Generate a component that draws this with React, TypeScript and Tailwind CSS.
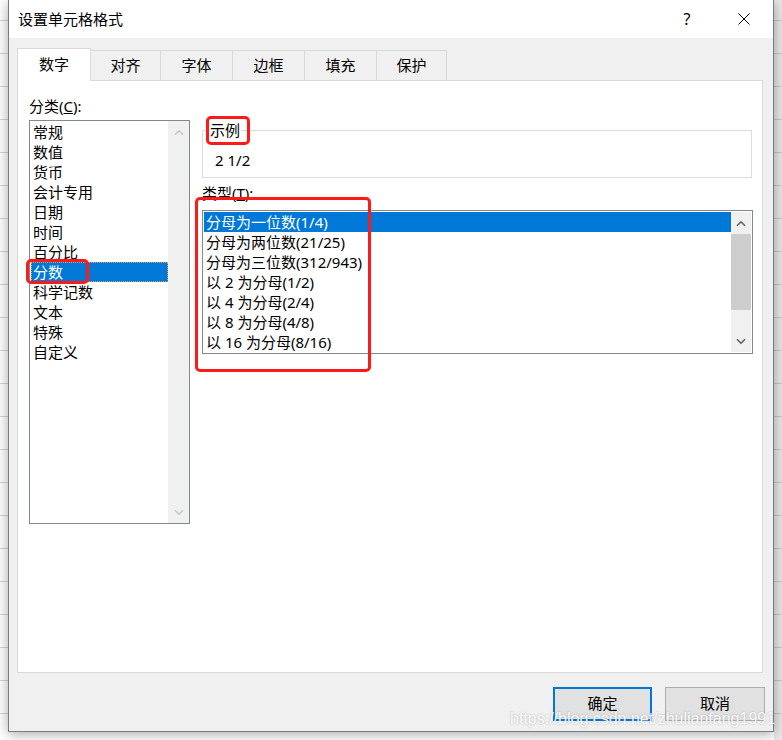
import React from 'react'

const categories = [
  '常规', '数值', '货币', '会计专用', '日期', '时间',
  '百分比', '分数', '科学记数', '文本', '特殊', '自定义'
]

const fractionTypes = [
  '分母为一位数(1/4)',
  '分母为两位数(21/25)',
  '分母为三位数(312/943)',
  '以 2 为分母(1/2)',
  '以 4 为分母(2/4)',
  '以 8 为分母(4/8)',
  '以 16 为分母(8/16)'
]

const tabs = [
  { label: '对齐', width: 'w-[70px]' },
  { label: '字体', width: 'w-[72px]' },
  { label: '边框', width: 'w-[72px]' },
  { label: '填充', width: 'w-[72px]' },
  { label: '保护', width: 'w-[70px]' }
]

function Chevron({ up, color }: { up?: boolean; color: string }) {
  return (
    <svg width="10" height="7" viewBox="0 0 10 7">
      <path
        d={up ? 'M1 5.8 L5 1.8 L9 5.8' : 'M1 1.2 L5 5.2 L9 1.2'}
        stroke={color}
        strokeWidth="1.6"
        fill="none"
      />
    </svg>
  )
}

function CategoryList() {
  return (
    <div className="flex h-[404px] w-[161px] border border-[#828790] bg-white pl-[1px]">
      <div className="flex-1 pt-[1px]">
        {categories.map((c) => (
          <div
            key={c}
            className={
              c === '分数'
                ? 'h-[20px] bg-[#0078d7] pl-[2px] leading-[20px] text-white outline-1 -outline-offset-1 outline-dotted outline-[#e8a060]'
                : 'h-[20px] pl-[2px] leading-[20px] text-black'
            }
          >
            {c}
          </div>
        ))}
      </div>
      <div className="flex w-[21px] flex-col bg-[#f0f0f0]">
        <div className="flex h-[22px] items-center justify-center">
          <Chevron up color="#c8c8c8" />
        </div>
        <div className="flex-1" />
        <div className="flex h-[22px] items-center justify-center">
          <Chevron color="#c8c8c8" />
        </div>
      </div>
    </div>
  )
}

function TypeList() {
  return (
    <div className="flex h-[144px] w-[551px] border border-[#828790] bg-white p-[1px]">
      <div className="flex-1 overflow-hidden">
        {fractionTypes.map((t, i) => (
          <div
            key={t}
            className={
              i === 0
                ? 'h-[20px] whitespace-nowrap bg-[#0078d7] pl-[2px] leading-[20px] text-white'
                : 'h-[20px] whitespace-nowrap pl-[2px] leading-[20px] text-black'
            }
          >
            {t}
          </div>
        ))}
      </div>
      <div className="flex w-[20px] flex-col bg-[#f0f0f0]">
        <div className="flex h-[22px] items-center justify-center">
          <Chevron up color="#606060" />
        </div>
        <div className="h-[76px] bg-[#cdcdcd]" />
        <div className="flex-1" />
        <div className="flex h-[22px] items-center justify-center">
          <Chevron color="#606060" />
        </div>
      </div>
    </div>
  )
}

export default function App() {
  return (
    <div className="relative flex h-[740px] w-[782px] overflow-hidden bg-[repeating-linear-gradient(to_bottom,#ffffff_0px,#ffffff_20px,#d4d4d4_20px,#d4d4d4_21px,#ffffff_21px,#ffffff_33px)] font-['Noto_Sans','Noto_Sans_CJK_SC',sans-serif] text-[15px] text-black">
      <div className="w-[8px]" />

      {/* dialog */}
      <div className="relative z-10 flex h-[732px] w-[766px] flex-col border-x border-b border-[#7a7a7a] bg-[#f0f0f0] shadow-[0_2px_12px_rgba(0,0,0,0.35)]">
        <div className="flex h-[38px] items-center bg-white pl-[9px] pr-[23px]">
          <span className="leading-[20px]">设置单元格格式</span>
          <span className="ml-auto w-[16px] text-center text-[16px] leading-[20px]">?</span>
          <svg className="ml-[43px]" width="12" height="12" viewBox="0 0 12 12">
            <path d="M0.5 0.5 L11.5 11.5 M11.5 0.5 L0.5 11.5" stroke="#000" strokeWidth="1" fill="none" />
          </svg>
        </div>

        <div className="px-[8px]">
          {/* tabs */}
          <div className="mt-[10px] flex h-[32px] items-end">
            <div className="relative z-10 -mb-px flex h-[33px] w-[74px] items-center justify-center border-x border-t border-[#d9d9d9] bg-white pb-[1px]">
              数字
            </div>
            {tabs.map((t) => (
              <div
                key={t.label}
                className={`flex h-[30px] ${t.width} items-center justify-center border-r border-t border-[#d9d9d9]`}
              >
                {t.label}
              </div>
            ))}
          </div>

          {/* panel */}
          <div className="flex h-[593px] w-[746px] border border-[#d9d9d9] bg-white pl-[11px] pt-[15px]">
            <div className="w-[161px]">
              <div className="mb-[4px] h-[20px] leading-[20px]">
                分类(<span className="underline">C</span>):
              </div>
              <CategoryList />
            </div>

            <div className="ml-[12px] mt-[24px] w-[551px]">
              <fieldset className="h-[58px] w-[550px] border border-[#dcdcdc] pl-[12px] pt-[10px]">
                <legend className="-ml-[6px] px-[1px] leading-[20px] text-black">示例</legend>
                <div className="leading-[20px]">2 1/2</div>
              </fieldset>
              <div className="mt-[5px] h-[20px] leading-[20px]">
                类型(<span className="underline">T</span>):
              </div>
              <div className="mt-[7px]">
                <TypeList />
              </div>
            </div>
          </div>

          {/* buttons */}
          <div className="mt-[14px] flex justify-end gap-[13px]">
            <button className="h-[34px] w-[99px] border-2 border-[#0078d7] bg-[#e1e1e1] pb-[2px] leading-[20px] text-black">
              确定
            </button>
            <button className="h-[34px] w-[100px] border border-[#adadad] bg-[#e1e1e1] pb-[2px] leading-[20px] text-black">
              取消
            </button>
          </div>
        </div>
      </div>

      <div className="flex-1 bg-[repeating-linear-gradient(to_bottom,#e8e8e8_0px,#e8e8e8_20px,#c8c8c8_20px,#c8c8c8_21px,#e8e8e8_21px,#e8e8e8_33px)]" />

      {/* annotations */}
      <div className="absolute left-[206px] top-[116px] z-20 h-[29px] w-[44px] rounded-[5px] border-[3px] border-[#ff1a1a]" />
      <div className="absolute left-[26px] top-[259px] z-20 h-[25px] w-[63px] rounded-[5px] border-[3px] border-[#ff1a1a]" />
      <div className="absolute left-[195px] top-[197px] z-20 h-[175px] w-[176px] rounded-[5px] border-[3px] border-[#ff1a1a]" />

      {/* watermark */}
      <div className="absolute left-[510px] top-[711px] z-20 font-['Liberation_Sans',sans-serif] text-[16px] leading-[16px] text-white/90 [text-shadow:0_0_2px_rgba(90,90,90,0.45)]">
        https://blog.csdn.net/zhulianfang1991
      </div>
    </div>
  )
}
